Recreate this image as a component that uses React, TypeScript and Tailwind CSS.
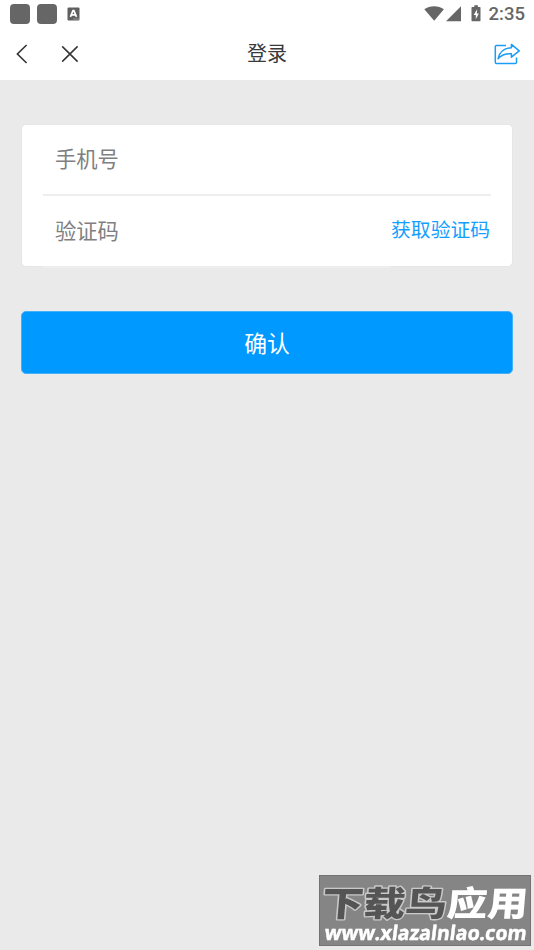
import { useState } from "react";

function StatusBar() {
  return (
    <div className="flex h-[27px] items-center justify-between pl-[10px] pr-[9px] text-[#666]">
      <div className="flex items-center">
        <span className="size-5 rounded-[4px] bg-[#666]" />
        <span className="ml-[7px] size-5 rounded-[4px] bg-[#666]" />
        <svg className="ml-[10px]" width="13" height="14" viewBox="0 0 13 14">
          <rect x="0.5" y="0.5" width="12" height="13" rx="1" fill="#5f5f5f" />
          <path d="M3.4 9.8 6 3.6h.9l2.6 6.2M4.4 7.8h4.2" fill="none" stroke="#fff" strokeWidth="1.7" />
          <path d="M6.5 12h5" stroke="#ccc" strokeWidth="1" strokeDasharray="1 1" />
        </svg>
      </div>
      <div className="flex items-center">
        <svg width="62" height="18" viewBox="0 0 62 18" fill="#666">
          <path d="M0.3 4.2C5.8 0.2 14.4 0.2 19.9 4.2L10.2 15.8Z" />
          <path d="M37 1.2V16.2H22Z" />
          <path d="M48.3 2h2V.3h3.6V2h2q.6 0 .6.6v13q0 .6-.6.6h-7.6q-.8 0-.8-.6v-13q0-.6.8-.6Z" />
          <path d="M53.2 4.2 49.7 10h2.1v4.2l3.1-5.6h-2Z" fill="#fff" />
        </svg>
        <span className="mt-0.5 ml-[3px] font-[Roboto,sans-serif] text-[18.5px] leading-none font-medium">2:35</span>
      </div>
    </div>
  );
}

function Header() {
  return (
    <header className="grid h-[53px] grid-cols-3 items-center">
      <div className="flex items-center pl-[15px]">
        <button aria-label="back">
          <svg width="14" height="20" viewBox="0 0 14 20" fill="none" stroke="#333" strokeWidth="1.6">
            <path d="M11.6 1 2.4 10l9.2 9" />
          </svg>
        </button>
        <button aria-label="close" className="ml-8">
          <svg width="18" height="18" viewBox="0 0 18 18" fill="none" stroke="#333" strokeWidth="1.5">
            <path d="M1.2 1.4 16.6 16.6M16.6 1.4 1.2 16.6" />
          </svg>
        </button>
      </div>
      <h1 className="pb-0.5 text-center text-[20px] leading-none text-[#3a3a3a]">登录</h1>
      <div className="flex justify-end pr-[13px]">
        <button aria-label="share">
          <svg width="27" height="22" viewBox="0 0 27 22" fill="none" stroke="#1c9cf5" strokeWidth="1.5" strokeLinejoin="round">
            <path d="M12 2.5H2.6Q1.3 2.5 1.3 3.8v15.4q0 1.3 1.3 1.3h18.6q1.3 0 1.3-1.3v-4.7" />
            <path d="M17.4 1.4 25.2 7.9l-7.8 6.3v-3.4C11 10.4 7.2 12 4 15.8 5.5 9 10.5 5 17.4 4.7Z" />
          </svg>
        </button>
      </div>
    </header>
  );
}

function Watermark() {
  return (
    <div className="fixed top-[875px] left-[319px] h-[71px] w-[212px] border border-[#727272] bg-[#858585]">
      <svg width="210" height="69" viewBox="0 0 210 69" className="overflow-visible">
        <g
          transform="translate(1 40) skewX(-5) scale(1 0.86)"
          fontFamily="'Noto Sans CJK SC', sans-serif"
          fontWeight="900"
          fontSize="40"
          strokeLinejoin="round"
          paintOrder="stroke"
        >
          <text x="0" y="0" textLength="125" lengthAdjust="spacingAndGlyphs" fill="#555" stroke="#c9c9c9" strokeWidth="3">下载鸟</text>
          <text x="125" y="0" textLength="81" lengthAdjust="spacingAndGlyphs" fill="#fff">应用</text>
        </g>
        <text
          transform="translate(4 63.5) skewX(-7)"
          textLength="202"
          lengthAdjust="spacingAndGlyphs"
          fill="#fff"
          stroke="#fff"
          strokeWidth="0.5"
          fontFamily="'Open Sans', 'Noto Sans', sans-serif"
          fontWeight="700"
          fontSize="20"
        >
          www.xlazalnlao.com
        </text>
      </svg>
    </div>
  );
}

export default function App() {
  const [phone, setPhone] = useState("");
  const [code, setCode] = useState("");

  return (
    <div className="min-h-screen bg-[#eaeaea] font-['Noto_Sans_CJK_SC',sans-serif]">
      <div className="bg-white">
        <StatusBar />
        <Header />
      </div>
      <form className="px-[21px] pt-[44px]" onSubmit={(e) => e.preventDefault()}>
        <div className="h-[143px] rounded-[5px] border border-[#e6e6e6] bg-white px-[21px]">
          <div className="h-[71px] border-b-2 border-[#eee]">
            <input
              value={phone}
              onChange={(e) => setPhone(e.target.value)}
              placeholder="手机号"
              className="h-[65px] w-full px-3 text-[21.3px] outline-none placeholder:text-[#808080]"
            />
          </div>
          <div className="flex h-[71px]">
            <input
              value={code}
              onChange={(e) => setCode(e.target.value)}
              placeholder="验证码"
              className="h-[72px] min-w-0 flex-1 border-b-2 border-[#eee] px-3 pb-1 text-[21.3px] outline-none placeholder:text-[#808080]"
            />
            <button type="button" className="h-[66px] pr-px text-[19.8px] whitespace-nowrap text-[#149fff]">
              获取验证码
            </button>
          </div>
        </div>
        <button className="mt-[44px] h-[63px] w-full rounded-[5px] border border-[#42b0fb] bg-[#0099ff] pt-0.5 text-[22.8px] text-white">
          确认
        </button>
      </form>
      <Watermark />
    </div>
  );
}
